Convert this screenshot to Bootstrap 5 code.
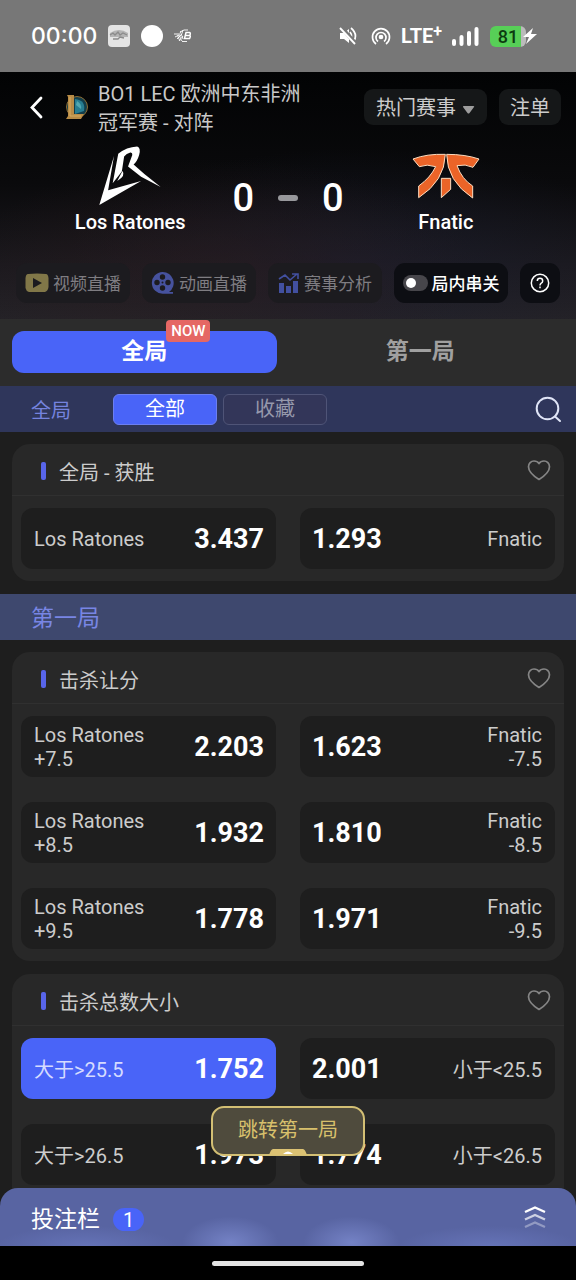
<!DOCTYPE html>
<html lang="zh-CN" data-bs-theme="dark">
<head>
<meta charset="utf-8">
<meta name="viewport" content="width=device-width, initial-scale=1">
<title>Los Ratones - Fnatic</title>
<link rel="stylesheet" href="https://cdn.jsdelivr.net/npm/bootstrap@5.3.0/dist/css/bootstrap.min.css">
<style>
body{background:#1e1e1e;color:#ccc;font-family:Roboto,"Noto Sans CJK SC",sans-serif;font-size:20px;line-height:24px}
button,input{font-family:inherit}
.status-bar{height:72px;background:#777;color:#fff;padding:0 39px 0 31px}
.status-left{gap:11px}
.status-right{gap:10px}
.clock{font:500 23px/24px Inter,sans-serif}
.lte{font-weight:700;font-size:20px}
.lte sup{font-size:16px;top:-6px}
.batt{width:36px;height:21px;border-radius:6px;background:linear-gradient(90deg,#57cf57 86%,#bbb 86%);color:#0c3a10;font:500 18px/21px Roboto,sans-serif}
.bolt{margin-left:-3px}
.hero{background:radial-gradient(ellipse 45% 45% at 38% 80%,#2e1c1e77,transparent),radial-gradient(ellipse 50% 45% at 62% 76%,#1b1f3288,transparent),linear-gradient(#020304,#0a0a0c 45%,#1b191e 78%,#242227)}
.hero-top{height:70px;padding:0 15px 0 28px}
.league{margin:0 8px 0 20px}
.match-title{font-size:20px;line-height:29px;max-width:220px;color:#c9c9c9;padding-top:4px}
.top-btns{gap:12px}
.dim-btn{background:#151718;color:#ccc;border:0;border-radius:9px;height:36px;padding:2px 11px 0;font-size:20px;line-height:34px}
.dim-btn-menu{padding:2px 12px 0}
.teams{height:97px;padding:0 28px}
.team{flex:1 1 0;color:#fff;font-weight:500;font-size:20px}
.team-logo{height:68px}
.scores{padding-top:14px}
.score{font-weight:500;font-size:38px;line-height:40px;color:#fff}
.dash{width:20px;height:6px;border-radius:3px;background:#98989c}
.actions{gap:12px;padding:24px 16px 16px}
.act{flex:1 1 0;height:40px;border:0;border-radius:11px;background:#1c1b1f;color:#7f7d82;font-size:17px;padding:0;gap:4px;white-space:nowrap}
.act span{padding-top:2px}
.act-on{background:#0d0e13;color:#fff;font-weight:500}
.act-q{flex:0 0 40px}
.sw{appearance:none;width:25px;height:16px;border-radius:8px;background:#47464b;margin:0}
.sw::before{content:"";display:block;width:10px;height:10px;border-radius:50%;background:#fff;margin:3px}
.sw:checked::before{margin-left:12px}
.tabs{background:#2c2c2c;padding:12px 12px 13px}
.tab{flex:12 1 0;height:42px;border:0;border-radius:12px;background:none;color:#a0a0a0;font-size:23px;font-weight:700}
.tab-on{flex-grow:11;background:#4964f8;color:#fff}
.now{left:calc(50% + 22px);top:-11px;height:22px;border-radius:4px;background:#e56764;color:#fff;font-size:15px;font-weight:500;line-height:22px;padding:0 5px}
.filter{background:#2f365b;height:46px;padding:0 14px 0 31px}
.filter-name{color:#7583df;width:82px;padding-top:3px}
.chips{gap:6px}
.chip{width:104px;height:31px;border:1px solid #4f5477;border-radius:6px;background:#333659;color:#9699ac;font-size:20px;line-height:28px;padding:0}
.chip-on{background:#4964f8;color:#fff;border-color:#6c7ff0}
.band{background:#3e486e;color:#7886e4;height:46px;margin-top:13px;padding:4px 31px 0;font-size:23px}
.market{background:#282828;border-radius:18px;margin:12px 12px 0;padding-bottom:12px}
.market-head{height:52px;padding:0 13px 0 29px;border-bottom:1px solid #303030}
.market-head h2{font-size:20px;line-height:24px;font-weight:400;margin:0;padding-top:7px;color:#ccc}
.mark-bar{width:5px;height:18px;border-radius:2px;background:#5865ea;margin:2px 13px 0 0}
.icon-btn{background:none;border:0;padding:0;line-height:0}
.odds-grid{display:grid;grid-template-columns:1fr 1fr;gap:25px 24px;padding:12px 9px 0}
.odd{height:61px;border:0;border-radius:12px;background:#1e1e1e;color:#ccc;font-size:20px;line-height:24px;padding:0 12px 0 13px;display:flex;align-items:center;justify-content:space-between;text-align:left}
.odd b{color:#fff;font-size:27px;font-weight:700}
.odd:nth-child(even){flex-direction:row-reverse;text-align:right;padding:0 13px 0 12px}
.odd-on{background:#4964f8}
.odd-on span{color:#d5dbff}
.page-end{margin-top:13px;margin-bottom:-24px;padding-bottom:25px}
.page-end .odd span{padding-top:3px}
.dock{z-index:5}
.jump{left:50%;bottom:calc(100% + 32px);transform:translateX(-50%);width:154px;height:50px;border:2px solid #d3bf74;border-radius:13px;background:#4f4b3d;color:#d8c06c;font-size:20px;line-height:24px;padding:0 0 3px}
.jump svg{position:absolute;left:56px;bottom:-1px}
.slip{height:58px;border-radius:18px 18px 0 0;padding:0 30px 0 31px;color:#fff;font-size:23px;background:radial-gradient(ellipse 48px 26px at 40% 94%,#7482c5,transparent),radial-gradient(ellipse 48px 26px at 61% 94%,#7482c5,transparent),radial-gradient(ellipse 90px 20px at 15% 100%,#6573b7,transparent),radial-gradient(ellipse 90px 20px at 85% 100%,#6573b7,transparent),#5864a2}
.slip-name{padding-top:5px}
.slip-count{width:31px;height:23px;border-radius:12px;background:#4964f8;font-size:20px;line-height:24px;margin:5px 0 0 13px}
.home-area{height:34px;background:#000}
.home-line{width:152px;height:5px;border-radius:3px;background:#e4e4e4}
</style>
</head>
<body>
<svg class="d-none"><symbol id="heart" viewBox="0 0 24 22"><path d="M12 20.500C8 18 1.500 13.500 1.500 7.800C1.500 4.500 4 2 7 2C9.500 2 11 3 12 4.500C13 3 14.500 2 17 2C20 2 22.500 4.500 22.500 7.800C22.500 13.500 16 18 12 20.500Z" fill="none" stroke="#858585" stroke-width="1.700" stroke-linejoin="round"/></symbol></svg>
<div class="d-flex flex-column min-vh-100">
<div class="status-bar d-flex align-items-center justify-content-between">
  <div class="status-left d-flex align-items-center">
    <span class="clock">00:00</span>
    <svg width="22" height="22" viewBox="0 0 22 22"><rect width="22" height="22" rx="4" fill="#e4e4e4"/><path d="M2 8Q11 2 20 8V12H2Z" fill="#b4b4b4"/><path d="M2 10l3-2 2 2 3-3 2 3 3-2 4 2M5 14h5l2-2 4 1" stroke="#8b8b8b" stroke-width="1.300" fill="none"/></svg>
    <svg width="22" height="22" viewBox="0 0 22 22"><circle cx="11" cy="11" r="11" fill="#fff"/></svg>
    <svg width="18" height="14" viewBox="0 0 18 14" fill="none" stroke="#fff"><path d="M0 5H3M1 8L5 6M4 4Q3 8 6 12M7 2Q4 7 8 12M9 1Q6 6 9 10M3 10L8 5M5 12L9 7M6 3L10 1H14M8 12.500H13" stroke-width=".9"/><path d="M12 3.500H15.500Q17 4 15.800 6.500Q17 7 15.500 9.500H10.500ZM11.500 6.500H15.500" stroke-width="1.500"/></svg>
  </div>
  <div class="status-right d-flex align-items-center">
    <svg width="18" height="20" viewBox="0 0 18 20"><path d="M1 7h4l5-4v14l-5-4H1Z" fill="#fff"/><path d="M11 6q3 4 0 8M12 2q7 6 3 13" fill="none" stroke="#fff" stroke-width="1.700"/><path d="M3 2l14 16" stroke="#777" stroke-width="4"/><path d="M1 2l15 16" stroke="#fff" stroke-width="1.900"/></svg>
    <svg class="ms-1" width="20" height="20" viewBox="0 0 20 20" fill="none" stroke="#fff" stroke-width="1.700"><circle cx="10" cy="11" r="1.500" fill="#fff"/><path d="M7 15.500A5 5 0 1 1 13 15.500M5 18A8.500 8.500 0 1 1 15 18"/></svg>
    <span class="lte">LTE<sup>+</sup></span>
    <svg width="28" height="19" viewBox="0 0 28 19" fill="#fff"><rect y="12" width="4" height="7" rx="2"/><rect x="7.500" y="8" width="4" height="11" rx="2"/><rect x="15" y="4" width="4" height="15" rx="2"/><rect x="22.500" width="4" height="19" rx="2"/></svg>
    <span class="d-flex align-items-center"><span class="batt text-center">81</span><svg class="bolt" width="14" height="16" viewBox="0 0 14 16"><path d="M10 0L0 9H6L3 16L14 6H8Z" fill="#fff"/></svg></span>
  </div>
</div>

<header class="hero">
  <div class="hero-top d-flex align-items-center">
    <button class="icon-btn" aria-label="返回"><svg width="16" height="24" viewBox="0 0 16 24"><path d="M13 3L4 12.500L13 22" fill="none" stroke="#fff" stroke-width="2.800" stroke-linecap="round"/></svg></button>
    <svg class="league" width="26" height="26" viewBox="0 0 26 26"><circle cx="13" cy="13" r="10.500" fill="#123d4a" stroke="#8d6d35"/><path d="M11 5Q22 6 20 17L11 20Z" fill="#277d91"/><path d="M13 7Q18 10 17 15L12 11Z" fill="#52a8b1"/><path d="M3 1H10V20H20L17 25H2L4 22V3Z" fill="#b88b46"/><path d="M6 3V22H17" fill="none" stroke="#d6ad62"/></svg>
    <div class="match-title">BO1 LEC 欧洲中东非洲冠军赛 - 对阵</div>
    <div class="top-btns d-flex ms-auto flex-shrink-0">
      <button class="dim-btn dim-btn-menu text-nowrap">热门赛事 <svg width="14" height="8" viewBox="0 0 14 8" class="align-middle"><path d="M3 0H12Q14 0 13 1L8.500 7Q7.500 8 6.500 7L2 1Q1.500 0 3 0Z" fill="#9d9d9d"/></svg></button>
      <button class="dim-btn text-nowrap">注单</button>
    </div>
  </div>
  <div class="teams d-flex">
    <div class="team d-flex flex-column align-items-center">
      <div class="team-logo d-flex align-items-center"><svg width="64" height="62" viewBox="298 42 196 188" fill="#fff"><path d="M343 158L360 68Q385 48 418 46Q430 50 424 72Q418 92 407 101L440 130L490 170L430 138L390 107L403 72Q404 63 397 64Q385 67 378 76L371 122Z"/><path d="M357 151L373 121Q384 136 357 151ZM347 75L329 180L430 151L302 225Z"/></svg></div>
      <div>Los Ratones</div>
    </div>
    <div class="scores d-flex align-items-center gap-4"><span class="score">0</span><span class="dash"></span><span class="score">0</span></div>
    <div class="team d-flex flex-column align-items-center">
      <div class="team-logo d-flex align-items-center"><svg width="68" height="46" viewBox="370 66 204 138" fill="#eb6428" stroke="#fbdcc0" stroke-width="3"><path d="M373 84Q415 68 470 70Q468 150 390 200V165Q425 140 441 107Q415 98 392 107ZM474 70Q530 70 571 84L553 109Q530 98 505 104Q520 145 552 165V201Q475 150 474 70ZM458 142H486V175L458 200Z"/></svg></div>
      <div>Fnatic</div>
    </div>
  </div>
  <div class="actions d-flex">
    <button class="act d-flex align-items-center justify-content-center"><svg width="24" height="20" viewBox="0 0 24 20"><path d="M3 1Q12 0 21 1Q23 1 23.500 5V14Q23 18 20 19H4Q1 18 .500 15V5Q1 1 3 1Z" fill="#817748"/><path d="M8 5L17 10L8 15Z" fill="#1c1b1f"/></svg><span>视频直播</span></button>
    <button class="act d-flex align-items-center justify-content-center"><svg width="24" height="24" viewBox="0 0 24 24"><path d="M11.500 1A10.800 10.800 0 1 0 12 22.800H22V21H18A11 11 0 0 0 11.500 1Z" fill="#46529e"/><g fill="#1c1b1f"><circle cx="11.500" cy="6" r="2.700"/><circle cx="6" cy="11.500" r="2.700"/><circle cx="17" cy="11.500" r="2.700"/><circle cx="11.500" cy="17" r="2.700"/><circle cx="11.500" cy="11.500" r="1"/></g></svg><span>动画直播</span></button>
    <button class="act d-flex align-items-center justify-content-center"><svg width="22" height="22" viewBox="0 0 22 22" fill="#4250a0"><path d="M1 11h5v10H1ZM8 14h5v7H8ZM15 9h5v12h-5Z"/><path d="M1 7l6-4 5 5 7-6M14 2h6v5" fill="none" stroke="#4250a0" stroke-width="1.600"/></svg><span>赛事分析</span></button>
    <label class="act act-on d-flex align-items-center justify-content-center"><input class="sw" type="checkbox" role="switch"><span>局内串关</span></label>
    <button class="act act-on act-q d-flex align-items-center justify-content-center" aria-label="帮助"><svg width="20" height="20" viewBox="0 0 20 20" fill="none" stroke="#fff" stroke-width="1.500"><circle cx="10" cy="10" r="8.700"/><path d="M7.300 8Q7.300 5.300 10 5.300T12.700 8Q12.700 9.400 11 10.300Q10 11 10 12.500M10 13.600V15.200"/></svg></button>
  </div>
</header>

<nav class="tabs d-flex">
  <button class="tab tab-on position-relative">全局<span class="now position-absolute">NOW</span></button>
  <button class="tab">第一局</button>
</nav>
<div class="filter d-flex align-items-center">
  <span class="filter-name">全局</span>
  <div class="chips d-flex">
    <button class="chip chip-on">全部</button>
    <button class="chip">收藏</button>
  </div>
  <button class="icon-btn ms-auto" aria-label="搜索"><svg width="27" height="27" viewBox="0 0 27 27" fill="none" stroke="#dfe4f6" stroke-width="2" stroke-linecap="round"><circle cx="12.500" cy="12.500" r="10.800"/><path d="M20 20.500L25 25"/></svg></button>
</div>

<main class="flex-grow-1">
  <section class="market">
    <div class="market-head d-flex align-items-center"><span class="mark-bar"></span><h2>全局 - 获胜</h2><button class="icon-btn ms-auto" aria-label="收藏"><svg width="24" height="22"><use href="#heart"/></svg></button></div>
    <div class="odds-grid">
      <button class="odd"><span>Los Ratones</span><b>3.437</b></button>
      <button class="odd"><span>Fnatic</span><b>1.293</b></button>
    </div>
  </section>
  <div class="band d-flex align-items-center">第一局</div>
  <section class="market">
    <div class="market-head d-flex align-items-center"><span class="mark-bar"></span><h2>击杀让分</h2><button class="icon-btn ms-auto" aria-label="收藏"><svg width="24" height="22"><use href="#heart"/></svg></button></div>
    <div class="odds-grid">
      <button class="odd"><span>Los Ratones<br>+7.5</span><b>2.203</b></button>
      <button class="odd"><span>Fnatic<br>-7.5</span><b>1.623</b></button>
      <button class="odd"><span>Los Ratones<br>+8.5</span><b>1.932</b></button>
      <button class="odd"><span>Fnatic<br>-8.5</span><b>1.810</b></button>
      <button class="odd"><span>Los Ratones<br>+9.5</span><b>1.778</b></button>
      <button class="odd"><span>Fnatic<br>-9.5</span><b>1.971</b></button>
    </div>
  </section>
  <section class="market page-end">
    <div class="market-head d-flex align-items-center"><span class="mark-bar"></span><h2>击杀总数大小</h2><button class="icon-btn ms-auto" aria-label="收藏"><svg width="24" height="22"><use href="#heart"/></svg></button></div>
    <div class="odds-grid">
      <button class="odd odd-on"><span>大于&gt;25.5</span><b>1.752</b></button>
      <button class="odd"><span>小于&lt;25.5</span><b>2.001</b></button>
      <button class="odd"><span>大于&gt;26.5</span><b>1.973</b></button>
      <button class="odd"><span>小于&lt;26.5</span><b>1.774</b></button>
    </div>
  </section>
</main>

<footer class="dock sticky-bottom">
  <button class="jump position-absolute">跳转第一局<svg width="38" height="6" viewBox="0 0 38 6"><path d="M4 0H34Q36 0 38 6H0Q2 0 4 0Z" fill="#dcc273"/><path d="M14 5Q19 0 24 5Z" fill="#fff"/></svg></button>
  <div class="slip d-flex align-items-center"><span class="slip-name">投注栏</span><span class="slip-count text-center">1</span>
    <button class="icon-btn ms-auto" aria-label="展开"><svg width="22" height="23" viewBox="0 0 22 23" fill="none" stroke="#fff" stroke-width="2.400"><path d="M1 6L11 1.500L21 6"/><path d="M1 13.500L11 9L21 13.500" opacity=".7"/><path d="M1 21L11 16.500L21 21" opacity=".35"/></svg></button>
  </div>
  <div class="home-area d-flex align-items-center justify-content-center"><span class="home-line"></span></div>
</footer>
</div>
<script src="https://cdn.jsdelivr.net/npm/bootstrap@5.3.0/dist/js/bootstrap.bundle.min.js"></script>
</body>
</html>
